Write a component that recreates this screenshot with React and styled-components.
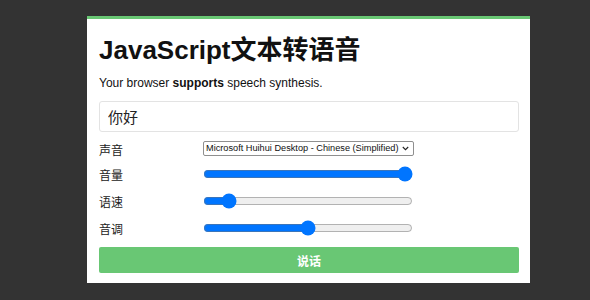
import React from 'react';
import styled, { createGlobalStyle } from 'styled-components';

const GlobalStyle = createGlobalStyle`
    html, body {
        margin: 0;
        padding: 0;
        background: #333333;
        font-family: "Liberation Sans", Arial, "Noto Sans CJK SC", sans-serif;
        color: #111;
    }
`;

const Page = styled.div`
    width: 590px;
    height: 300px;
    padding-top: 16px;
    box-sizing: border-box;
    overflow: hidden;
`;

const Card = styled.div`
    width: 443px;
    margin-left: 87px;
    background: #fff;
    border-top: 3px solid #69c774;
    padding: 14px 11px 10px 12px;
    box-sizing: border-box;
`;

const Title = styled.h1`
    margin: 0;
    font-size: 26px;
    font-weight: 700;
    line-height: 34px;
    color: #111;
    font-family: "Liberation Sans", Arial, "Noto Sans CJK SC", sans-serif;
`;

const Support = styled.p`
    margin: 8px 0 0;
    font-size: 12px;
    line-height: 16px;
    color: #111;

    b {
        font-weight: 700;
    }
`;

const TextInput = styled.input`
    display: block;
    width: 100%;
    height: 31px;
    margin: 10px 0 0;
    box-sizing: border-box;
    border: 1px solid #e3e3e3;
    border-radius: 3px;
    padding: 0 8px;
    font-size: 15px;
    font-family: "Noto Sans CJK SC", sans-serif;
    color: #222;
    outline: none;
`;

const Form = styled.div`
    display: grid;
    grid-template-columns: 104px 1fr;
    grid-template-rows: 24px 27px 27px 27px;
    align-items: center;
    margin-top: 4px;
`;

const Label = styled.label`
    font-size: 12px;
    font-family: "Noto Sans CJK SC", sans-serif;
    color: #222;
    padding-top: 2px;
`;

const SelectWrap = styled.div`
    position: relative;
    width: 211px;
    height: 15px;

    svg {
        position: absolute;
        right: 5px;
        top: 5px;
        pointer-events: none;
    }
`;

const VoiceSelect = styled.select`
    display: block;
    appearance: none;
    width: 100%;
    height: 15px;
    padding: 0 0 0 2px;
    font-size: 9.2px;
    font-family: "Liberation Sans", Arial, sans-serif;
    color: #111;
    border: 1px solid #8f8f8f;
    border-radius: 2px;
    background: #fff;
    outline: none;
`;

const Range = styled.input`
    width: 210px;
    margin: 0;
    accent-color: #0075ff;
`;

const SpeakButton = styled.button`
    display: block;
    width: 100%;
    height: 26px;
    margin-top: 6px;
    border: none;
    border-radius: 2px;
    background: #69c774;
    color: #fff;
    font-size: 12px;
    font-weight: 700;
    font-family: "Noto Sans CJK SC", sans-serif;
`;

const App = () => {
    return (
        <Page>
            <GlobalStyle />
            <Card>
                <Title>JavaScript文本转语音</Title>
                <Support>Your browser <b>supports</b> speech synthesis.</Support>
                <TextInput defaultValue="你好" />
                <Form>
                    <Label>声音</Label>
                    <SelectWrap>
                        <VoiceSelect defaultValue="huihui">
                            <option value="huihui">Microsoft Huihui Desktop - Chinese (Simplified)</option>
                        </VoiceSelect>
                        <svg width="7" height="5" viewBox="0 0 7 5">
                            <path d="M0.8 1 L3.5 3.7 L6.2 1" fill="none" stroke="#222" strokeWidth="1.1" />
                        </svg>
                    </SelectWrap>
                    <Label>音量</Label>
                    <Range type="range" min="0" max="1" step="0.1" defaultValue="1" />
                    <Label>语速</Label>
                    <Range type="range" min="0.1" max="10" step="0.1" defaultValue="1" />
                    <Label>音调</Label>
                    <Range type="range" min="0" max="2" step="0.1" defaultValue="1" />
                </Form>
                <SpeakButton>说话</SpeakButton>
            </Card>
        </Page>
    );
};

export default App;
